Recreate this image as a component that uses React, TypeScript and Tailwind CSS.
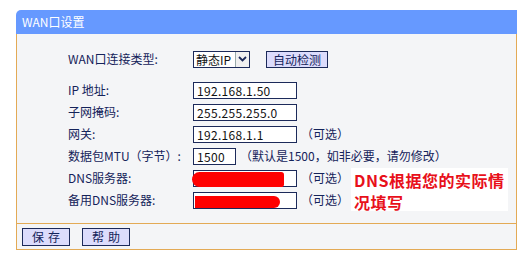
import React from 'react';

const font = { fontFamily: '"Noto Sans CJK SC", "Noto Sans", sans-serif' };

const Field = ({ width = 'w-[104px]', value = '' }: { width?: string; value?: string }) => (
  <div className={`${width} h-[17px] bg-white border border-[#1c2a5a] pl-[3px] text-[12px] leading-[15px] text-[#111] tracking-[0.3px]`}>
    {value}
  </div>
);

const Row = ({ label, children }: { label: string; children: React.ReactNode }) => (
  <div className="flex items-center h-[22px]">
    <div className="w-[125px] text-[12px] text-[#14235a]">{label}</div>
    {children}
  </div>
);

const Hint = ({ text, className = '' }: { text: string; className?: string }) => (
  <span className={`text-[12px] text-[#14235a] ${className}`}>{text}</span>
);

export default function App() {
  return (
    <div className="w-[528px] h-[267px] bg-white pt-[10px] pl-[16px]" style={font}>
      <div className="w-[501px]">
        {/* title */}
        <div className="h-[24px] bg-[#6699ff] rounded-tl-[5px] text-white text-[12px] leading-[24px] pl-[6px]">
          WAN口设置
        </div>

        <div className="relative h-[190px] bg-[#f4f5f7] border-x border-b border-[#e3aa55] pl-[51px] pt-[14px]">
          <Row label="WAN口连接类型:">
            <div className="flex items-center h-[17px] w-[57px] bg-white border border-[#1c2a5a]">
              <span className="text-[12px] pl-[2px] text-[#111] flex-1 leading-[15px]">静态IP</span>
              <span className="w-[14px] h-[15px] border-l border-[#9aa] bg-[#f0f0f0] flex items-center justify-center">
                <svg width="9" height="6" viewBox="0 0 9 6">
                  <path d="M1 1 L4.5 4.5 L8 1" stroke="#1c2a5a" strokeWidth="1.8" fill="none" />
                </svg>
              </span>
            </div>
            <button className="ml-[16px] w-[62px] h-[17px] bg-[#dcdcfc] border border-[#1c2a5a] text-[12px] leading-[15px] text-[#14235a]">
              自动检测
            </button>
          </Row>

          <div className="h-[9px]" />

          <Row label="IP 地址:">
            <Field value="192.168.1.50" />
          </Row>
          <Row label="子网掩码:">
            <Field value="255.255.255.0" />
          </Row>
          <Row label="网关:">
            <Field value="192.168.1.1" />
            <Hint text="（可选）" className="ml-[4px]" />
          </Row>
          <Row label="数据包MTU（字节）:">
            <Field width="w-[43px]" value="1500" />
            <Hint text="（默认是1500，如非必要，请勿修改）" className="ml-[4px]" />
          </Row>
          <Row label="DNS服务器:">
            <Field />
            <Hint text="（可选）" className="ml-[4px]" />
          </Row>
          <Row label="备用DNS服务器:">
            <Field />
            <Hint text="（可选）" className="ml-[4px]" />
          </Row>

          {/* red scribbles over DNS inputs */}
          <div className="absolute left-[175px] top-[138px] w-[92px] h-[15px] bg-[#ff0000] rounded-l-[8px] rounded-r-[3px]" />
          <div className="absolute left-[178px] top-[162px] w-[85px] h-[12px] bg-[#ff0000] rounded-r-[6px]" />

          {/* annotation */}
          <div className="absolute left-[334px] top-[134px] w-[157px] h-[43px] bg-white pl-[3px] pt-[1px] text-[16px] leading-[22px] font-bold text-[#e8101a] whitespace-nowrap tracking-[0.5px]">
            DNS根据您的实际情<br />况填写
          </div>
        </div>

        <div className="h-[26px] bg-[#f4f5f7] border-x border-b border-[#e3aa55] flex items-center pl-[5px] gap-[12px]">
          <button className="w-[48px] h-[18px] bg-[#dcdcfc] border border-[#1c2a5a] text-[12px] leading-[16px] text-[#14235a] tracking-[4px] pl-[4px]">
            保存
          </button>
          <button className="w-[48px] h-[18px] bg-[#dcdcfc] border border-[#1c2a5a] text-[12px] leading-[16px] text-[#14235a] tracking-[4px] pl-[4px]">
            帮助
          </button>
        </div>
      </div>
    </div>
  );
}
